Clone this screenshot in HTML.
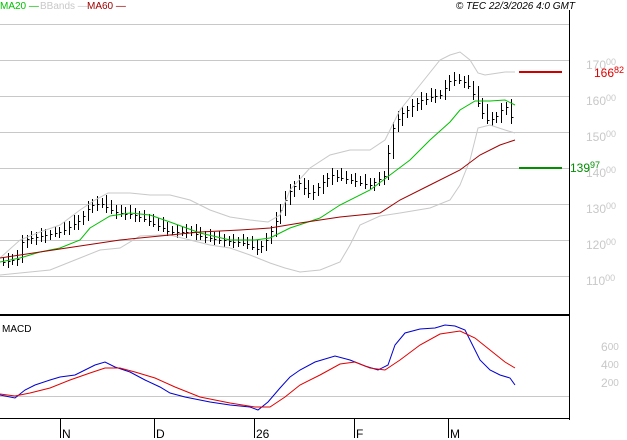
<!DOCTYPE html>
<html><head><meta charset="utf-8"><style>
body{margin:0;background:#fff;width:627px;height:440px;overflow:hidden;font-family:"Liberation Sans",sans-serif}
svg{display:block}
text{font-family:"Liberation Sans",sans-serif}
</style></head><body>
<svg id="s" width="627" height="440" xmlns="http://www.w3.org/2000/svg">
<g stroke="#c8c8c8" stroke-width="1">
<line x1="0" y1="24.5" x2="569" y2="24.5"/><line x1="0" y1="60.5" x2="569" y2="60.5"/>
<line x1="0" y1="96.5" x2="569" y2="96.5"/><line x1="0" y1="132.5" x2="569" y2="132.5"/>
<line x1="0" y1="168.5" x2="569" y2="168.5"/><line x1="0" y1="204.5" x2="569" y2="204.5"/>
<line x1="0" y1="240.5" x2="569" y2="240.5"/><line x1="0" y1="276.5" x2="569" y2="276.5"/>
<line x1="0" y1="396.5" x2="569" y2="396.5"/>
</g>
<line x1="569.5" y1="10" x2="569.5" y2="420" stroke="#000"/>
<line x1="0" y1="315" x2="570" y2="315" stroke="#000" stroke-width="2"/>
<line x1="0" y1="418.5" x2="570" y2="418.5" stroke="#000"/>
<g stroke="#000"><line x1="60.5" y1="418" x2="60.5" y2="438"/><line x1="154.5" y1="418" x2="154.5" y2="438"/><line x1="254.5" y1="418" x2="254.5" y2="438"/><line x1="354.5" y1="418" x2="354.5" y2="438"/><line x1="448.5" y1="418" x2="448.5" y2="438"/></g>
<g font-size="12" fill="#000"><text x="62" y="438">N</text><text x="156" y="438">D</text><text x="256" y="438">26</text><text x="356" y="438">F</text><text x="450" y="438">M</text></g>
<text x="2" y="332" font-size="10" fill="#000">MACD</text>
<g font-size="12" fill="#c8c8c8">
<text x="586" y="69">170<tspan font-size="9" dy="-4">00</tspan></text>
<text x="586" y="105">160<tspan font-size="9" dy="-4">00</tspan></text>
<text x="586" y="141">150<tspan font-size="9" dy="-4">00</tspan></text>
<text x="586" y="177">140<tspan font-size="9" dy="-4">00</tspan></text>
<text x="586" y="213">130<tspan font-size="9" dy="-4">00</tspan></text>
<text x="586" y="249">120<tspan font-size="9" dy="-4">00</tspan></text>
<text x="586" y="285">110<tspan font-size="9" dy="-4">00</tspan></text>
<text x="601" y="351">6<tspan font-size="10" dy="-1">00</tspan></text>
<text x="601" y="369">4<tspan font-size="10" dy="-1">00</tspan></text>
<text x="601" y="387">2<tspan font-size="10" dy="-1">00</tspan></text></g>
<line x1="519" y1="72" x2="562" y2="72" stroke="#d00000" stroke-width="2"/>
<text x="594" y="77" font-size="12" fill="#e00000">166<tspan font-size="9" dy="-4">82</tspan></text>
<line x1="519" y1="168" x2="562" y2="168" stroke="#009000" stroke-width="2"/>
<text x="570" y="172" font-size="12" fill="#009000">139<tspan font-size="9" dy="-4">97</tspan></text>
<g font-size="10"><text x="0" y="9" fill="#00c000">MA20 —</text><text x="40" y="9" fill="#c8c8c8">BBands —</text><text x="87" y="9" fill="#a00000">MA60 —</text>
<text x="575" y="9" fill="#000" font-style="italic" text-anchor="end">© TEC 22/3/2026 4:0 GMT</text></g>
<g id="bars" stroke="#000" stroke-width="1"></g>
<g fill="none" stroke-width="1">
<polyline id="up" stroke="#c8c8c8"/><polyline id="lo" stroke="#c8c8c8"/>
<polyline id="m20" stroke="#00c000"/><polyline id="m60" stroke="#a00000"/>
<polyline id="mb" stroke="#0000d0"/><polyline id="mr" stroke="#e00000"/>
</g>
</svg>
<script>
function set(id,a){document.getElementById(id).setAttribute('points',a.join(' '));}
set('up',["0,258","20,240","40,232","60,225","80,210","95,200","108,193","130,193","150,195","170,195","190,200","210,210","230,217","250,220","268,222","280,215","290,190","310,168","330,155","350,150","370,150","385,140","400,110","420,85","440,60","450,55","460,52","470,60","478,73","485,75","505,72","515,72"]);
set('lo',["0,275","20,273","50,270","80,258","100,250","120,248","140,236","160,235","170,235","190,240","210,245","230,248","250,255","270,263","285,268","300,272","320,270","340,262","350,245","360,225","380,216","400,213","430,208","450,200","460,185","470,160","478,128","490,125","505,130","515,133"]);
set('m20',["0,262","20,258","40,252","60,248","80,240","90,228","110,216","130,213","150,215","170,222","200,233","230,240","255,240","270,238","290,228","320,218","340,205","370,190","390,175","410,160","430,140","450,122","460,110","475,101","490,101","505,100","515,105"]);
set('m60',["0,258","40,252","80,246","120,240","160,236","200,232","240,230","270,228","300,223","340,217","380,213","400,200","430,185","460,170","480,155","500,145","515,140"]);
set('mb',["0,395","15,398","25,390","35,385","50,380","60,377","75,375","85,370","95,365","105,362","115,367","130,372","145,380","160,387","170,393","185,397","210,402","230,405","250,407","258,410","268,402","280,388","290,377","300,370","315,362","335,356","350,360","365,366","378,370","388,365","395,345","405,333","420,329","435,328","445,325","455,326","465,330","470,340","480,360","490,370","500,375","510,378","515,385"]);
set('mr',["0,394","15,396","30,393","50,388","70,380","90,373","105,368","120,368","135,372","155,378","175,387","200,397","230,403","255,407","270,407","285,397","300,385","320,375","340,364","355,362","370,368","385,370","400,360","420,345","440,334","460,331","475,338","490,350","505,362","515,368"]);
var k=[[3,262],[20,258],[22,240],[40,236],[60,232],[80,220],[90,205],[100,203],[115,212],[135,215],[150,222],[170,232],[190,232],[200,236],[220,240],[245,243],[258,250],[268,238],[278,215],[290,190],[298,182],[310,195],[330,175],[350,180],[370,185],[385,175],[392,130],[400,115],[410,108],[420,100],[440,95],[450,80],[460,80],[468,85],[476,100],[486,120],[495,118],[505,105],[510,115],[515,133]];
function f(x){for(var i=0;i<k.length-1;i++){if(x<=k[i+1][0]){var t=(x-k[i][0])/(k[i+1][0]-k[i][0]);return k[i][1]+t*(k[i+1][1]-k[i][1]);}}return k[k.length-1][1];}
var g=document.getElementById('bars'),h='',prev=f(3);
for(var x=3;x<=515;x+=4.7){var c=f(x),hi=Math.min(c,prev)-4-((x*7)%5),lo=Math.max(c,prev)+3+((x*3)%4);
var X=Math.round(x)+.5;h+='<line x1="'+X+'" y1="'+hi.toFixed(0)+'" x2="'+X+'" y2="'+lo.toFixed(0)+'"/><line x1="'+X+'" y1="'+c.toFixed(0)+'.5" x2="'+(X+2)+'" y2="'+c.toFixed(0)+'.5"/>';prev=c;}
g.innerHTML=h;
</script>
</body></html>
